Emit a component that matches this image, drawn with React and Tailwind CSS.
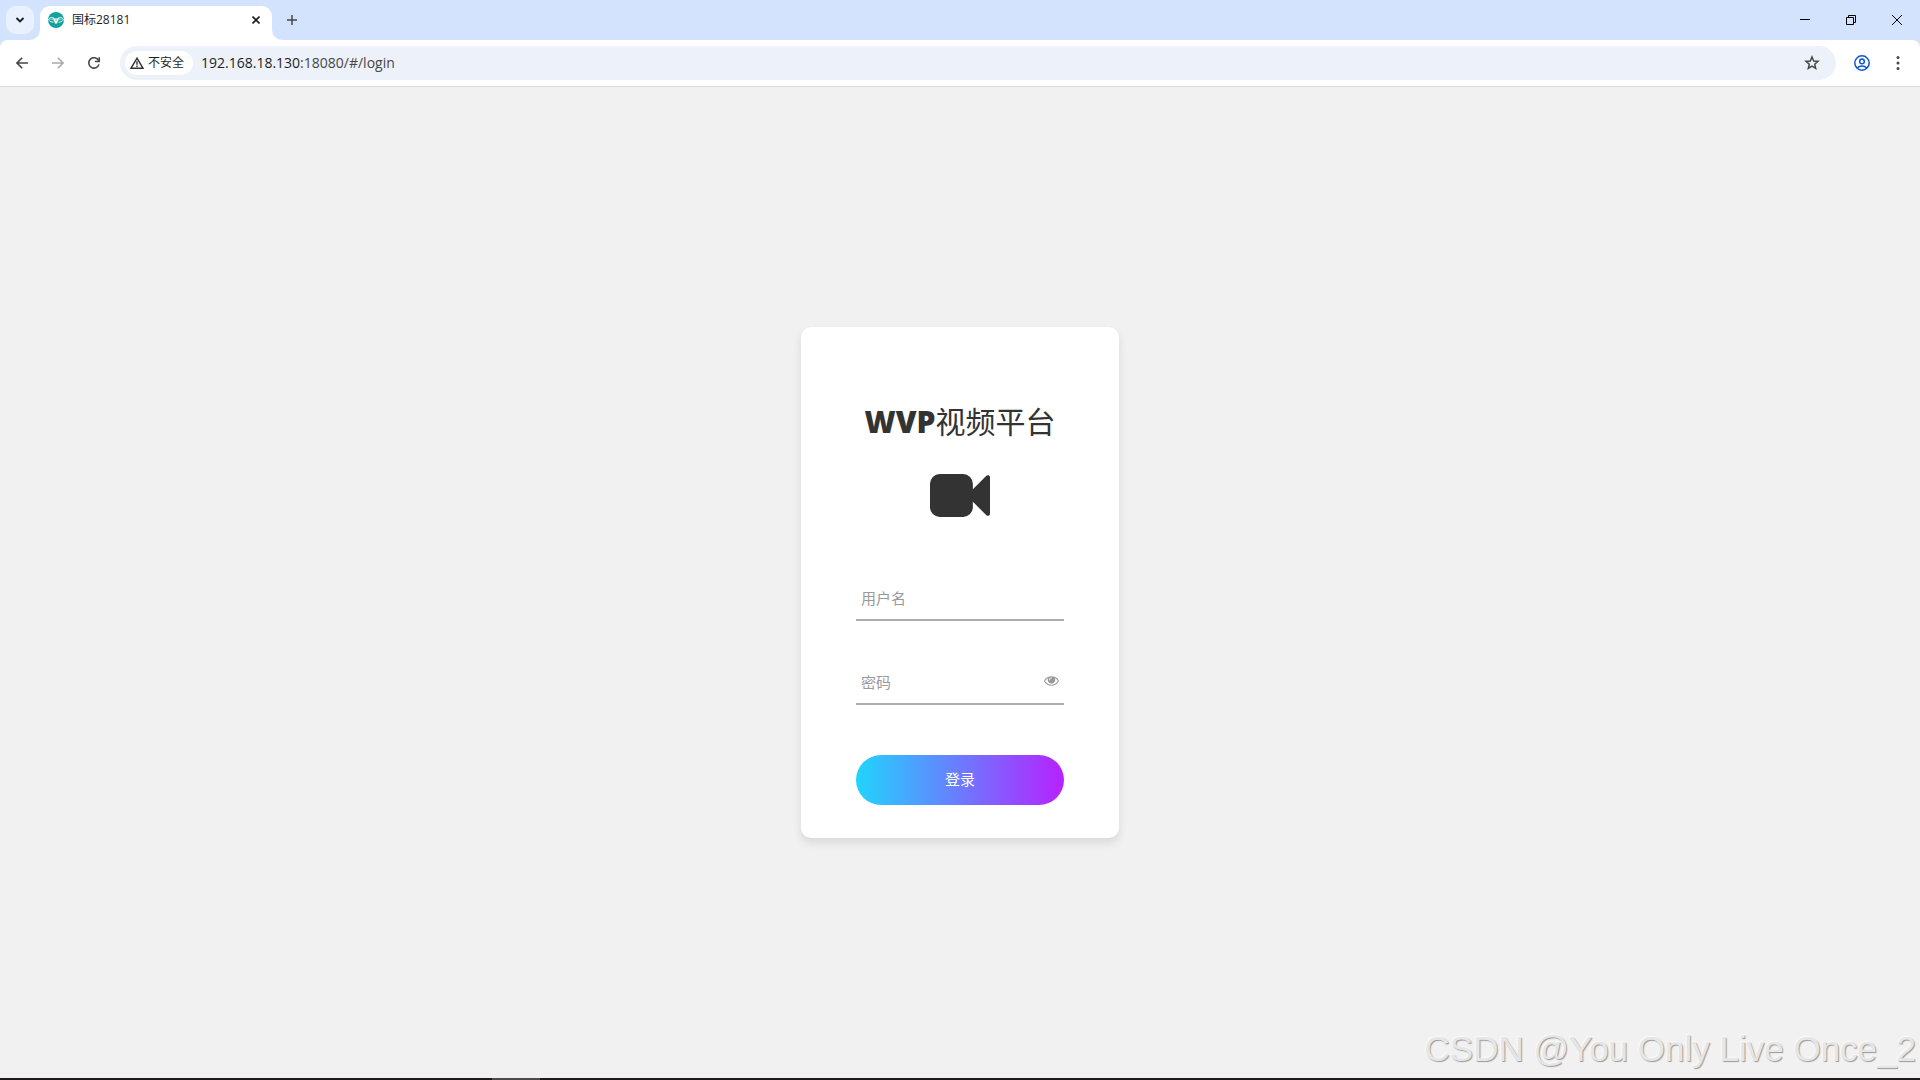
import React from "react";

const UI_FONT = "font-['Open_Sans','Noto_Sans_CJK_SC',sans-serif]";

function Favicon() {
  return (
    <svg viewBox="0 0 16 16" className="size-4 shrink-0" aria-hidden="true">
      <circle cx="8" cy="8" r="8" fill="#12a3a0" />
      <path d="M6 6.200C4.500 5.200 1.800 5.300.8 7c-.3 1.700 1.700 3.200 4.700 3M10 6.200c1.500-1 4.200-.9 5.200.8.3 1.700-1.700 3.200-4.700 3" fill="none" stroke="#fff" strokeWidth="0.900" />
      <path d="M2.600 7.500c1-.6 2.200-.4 3.200.4M13.400 7.500c-1-.6-2.200-.4-3.200.4" fill="none" stroke="#c4e8e7" strokeWidth="0.900" />
      <path d="M5 5.700 7 6.500h2l2-.8-.7 2.300-1.100 3L8 12l-1.200-1L5.700 8z" fill="#fff" />
      <path d="M7 7.500 8 9.600l1-2.100z" fill="#8bd0cf" />
    </svg>
  );
}

function TabStrip() {
  return (
    <header className="flex h-10 bg-[#d3e3fd]">
      <button aria-label="搜索标签页" className="ml-1.5 mt-1.5 flex size-7 items-center justify-center rounded-[10px] bg-[#e9f0fe]">
        <svg viewBox="0 0 10 10" className="size-2.5" fill="none" stroke="#1f1f1f" strokeWidth="1.900" aria-hidden="true">
          <path d="M1.500 3 5 6.500 8.500 3" />
        </svg>
      </button>
      <svg viewBox="0 0 10 10" className="-ml-1 size-2.5 self-end" fill="#fff" aria-hidden="true">
        <path d="M10 0v10H0A10 10 0 0 0 10 0z" />
      </svg>
      <div className="mt-1.5 flex w-[232px] items-center rounded-t-[10px] bg-white px-2 pb-1.5">
        <Favicon />
        <span className="ml-2 flex-1 text-xs leading-4 text-[#1f1f1f]">国标28181</span>
        <button aria-label="关闭标签页" className="flex size-4 items-center justify-center">
          <svg viewBox="0 0 8 8" className="size-2" stroke="#1f1f1f" strokeWidth="1.600" aria-hidden="true">
            <path d="m.5.5 7 7M7.500.5l-7 7" />
          </svg>
        </button>
      </div>
      <svg viewBox="0 0 10 10" className="size-2.5 self-end" fill="#fff" aria-hidden="true">
        <path d="M0 0v10h10A10 10 0 0 1 0 0z" />
      </svg>
      <button aria-label="新标签页" className="mt-1.5 flex h-7 w-5 items-center justify-center">
        <svg viewBox="0 0 10 10" className="size-2.5" stroke="#474747" strokeWidth="1.500" aria-hidden="true">
          <path d="M5 0v10M0 5h10" />
        </svg>
      </button>
      <div className="ml-auto flex items-center">
        <button aria-label="最小化" className="flex h-10 w-[46px] items-center justify-center">
          <svg viewBox="0 0 10 10" className="size-2.5" stroke="#000" aria-hidden="true">
            <path d="M0 4.500h10" />
          </svg>
        </button>
        <button aria-label="还原" className="flex h-10 w-[46px] items-center justify-center">
          <svg viewBox="0 0 10 10" className="size-2.5" fill="none" stroke="#000" aria-hidden="true">
            <path d="M.5 2.500h7v7h-7zM2.500 2.500v-2h7v7h-2" />
          </svg>
        </button>
        <button aria-label="关闭" className="flex h-10 w-[46px] items-center justify-center">
          <svg viewBox="0 0 10 10" className="size-2.5" stroke="#000" aria-hidden="true">
            <path d="m0 0 10 10M10 0 0 10" />
          </svg>
        </button>
      </div>
    </header>
  );
}

function Toolbar() {
  return (
    <div className="bg-[#d3e3fd]">
      <div className="flex h-[47px] items-center rounded-t-lg border-b border-[#dcdcdc] bg-white">
        <button aria-label="后退" className="ml-3 flex size-5 items-center justify-center">
          <svg viewBox="0 0 12 12" className="size-3" fill="none" stroke="#474747" strokeWidth="1.600" aria-hidden="true">
            <path d="M12 6H1.200M6.200.8 1 6l5.200 5.200" />
          </svg>
        </button>
        <button aria-label="前进" className="ml-4 flex size-5 items-center justify-center">
          <svg viewBox="0 0 12 12" className="size-3" fill="none" stroke="#ababab" strokeWidth="1.600" aria-hidden="true">
            <path d="M0 6h10.800M5.800.8 11 6l-5.200 5.200" />
          </svg>
        </button>
        <button aria-label="重新加载" className="ml-4 flex size-5 items-center justify-center">
          <svg viewBox="0 0 12 12" className="size-3" fill="none" stroke="#474747" strokeWidth="1.600" aria-hidden="true">
            <path d="M11 7.400A5.200 5.200 0 1 1 10.600 3.500" />
            <path d="M11.200.200v4.300H6.900" />
          </svg>
        </button>
        <div className="ml-4 flex h-[34px] flex-1 items-center rounded-full bg-[#ecf1fa] pl-[5px] pr-4">
          <button className="flex h-6 w-[68px] items-center gap-1 rounded-full bg-white pl-[5px] text-xs leading-4 text-[#1f1f1f]">
            <svg viewBox="0 0 14 12" className="h-3 w-3.5 shrink-0" fill="none" stroke="#333" strokeWidth="1.400" aria-hidden="true">
              <path d="M7 1.200 13 11.300H1z" />
              <path d="M7 4.300v3.400M7 8.600v1.400" />
            </svg>
            <span className="whitespace-nowrap">不安全</span>
          </button>
          <div className="ml-2 flex-1 text-sm leading-5 text-[#1f1f1f]">
            192.168.18.130<span className="text-[#474747]">:18080/#/login</span>
          </div>
          <button aria-label="为此标签页添加书签">
            <svg viewBox="0 0 16 16" className="size-4" fill="none" stroke="#474747" strokeWidth="1.500" aria-hidden="true">
              <path d="m8 2 1.700 4 4.300.4-3.300 2.800 1 4.200L8 11.200l-3.700 2.200 1-4.200L2 6.400 6.300 6z" />
            </svg>
          </button>
        </div>
        <button aria-label="用户" className="ml-[18px]">
          <svg viewBox="0 0 16 16" className="size-4" fill="none" stroke="#0b57d0" strokeWidth="1.500" aria-hidden="true">
            <circle cx="8" cy="8" r="7.200" />
            <circle cx="8" cy="6.400" r="2.300" />
            <path d="M3.200 13c1.300-1.400 3-2 4.800-2s3.500.6 4.800 2" />
          </svg>
        </button>
        <button aria-label="菜单" className="ml-[18px] mr-3">
          <svg viewBox="0 0 20 16" className="h-4 w-5" fill="#474747" aria-hidden="true">
            <circle cx="10" cy="2.600" r="1.500" />
            <circle cx="10" cy="8" r="1.500" />
            <circle cx="10" cy="13.400" r="1.500" />
          </svg>
        </button>
      </div>
    </div>
  );
}

function LoginCard() {
  return (
    <form onSubmit={(e) => e.preventDefault()} className="w-[318px] rounded-[10px] bg-white px-[55px] pb-[33px] pt-[77px] shadow-[0_5px_10px_rgba(0,0,0,0.1)]">
      <h1 className="whitespace-nowrap text-center text-[30px] leading-9 text-[#333]">
        <span className="font-extrabold">WVP</span>视频平台
      </h1>
      <svg viewBox="0 256 1792 1280" className="mx-auto mt-[34px] block h-[43px] w-[60px]" fill="#333" aria-hidden="true">
        <path d="M1792 352v1088q0 42-39 59-13 5-25 5-27 0-45-19l-403-403v166q0 119-84.500 203.500t-203.500 84.500h-704q-119 0-203.500-84.500t-84.500-203.500v-704q0-119 84.500-203.500t203.500-84.500h704q119 0 203.500 84.500t84.500 203.500v165l403-402q18-19 45-19 12 0 25 5 39 17 39 59z" />
      </svg>
      <div className="mt-[57px] border-b-2 border-[#adadad]">
        <input aria-label="用户名" type="text" placeholder="用户名" className="block h-[45px] w-full px-[5px] pt-0.5 text-[15px] text-[#555] outline-none placeholder:text-[#999]" />
      </div>
      <div className="mt-[37px] flex items-center border-b-2 border-[#adadad] pr-[5px]">
        <input aria-label="密码" type="password" placeholder="密码" className="block h-[45px] w-full min-w-0 flex-1 px-[5px] pt-0.5 text-[15px] text-[#555] outline-none placeholder:text-[#999]" />
        <button type="button" aria-label="显示密码">
          <svg viewBox="0 384 1792 1152" className="h-2.5 w-[15px]" fill="#999" aria-hidden="true">
            <path d="M1664 960q-152-236-381-353 61 104 61 225 0 185-131.500 316.500t-316.500 131.500-316.500-131.500-131.500-316.500q0-121 61-225-229 117-381 353 133 205 333.500 326.500t434.500 121.500 434.500-121.500 333.500-326.500zm-720-384q0-20-14-34t-34-14q-125 0-214.500 89.500t-89.500 214.500q0 20 14 34t34 14 34-14 14-34q0-86 61-147t147-61q20 0 34-14t14-34zm848 384q0 34-20 69-140 230-376.500 368.500t-499.500 138.500-499.500-139-376.500-368q-20-35-20-69t20-69q140-229 376.500-368t499.500-139 499.500 139 376.500 368q20 35 20 69z" />
          </svg>
        </button>
      </div>
      <button type="submit" className="mt-[50px] block h-[50px] w-full rounded-full bg-[linear-gradient(to_right,#21d4fd,#b721ff)] pb-0.5 text-[15px] text-white">
        登录
      </button>
    </form>
  );
}

export default function App() {
  return (
    <div className={`flex min-h-screen flex-col bg-[#f1f1f1] ${UI_FONT}`}>
      <TabStrip />
      <Toolbar />
      <main className="relative flex flex-1 items-center justify-center">
        <LoginCard />
        <p className="absolute bottom-2 right-1 whitespace-nowrap font-['Liberation_Sans',sans-serif] text-[35px] leading-[42px] text-[#e6e6e6] [text-shadow:1px_1px_1px_#999,-1px_-1px_1px_#fafafa]">
          CSDN @You Only Live Once_2
        </p>
      </main>
      <div className="flex h-0.5 bg-[#1d1a1c]">
        <div className="ml-[492px] w-12 bg-[#4d4a4c]" />
      </div>
    </div>
  );
}
